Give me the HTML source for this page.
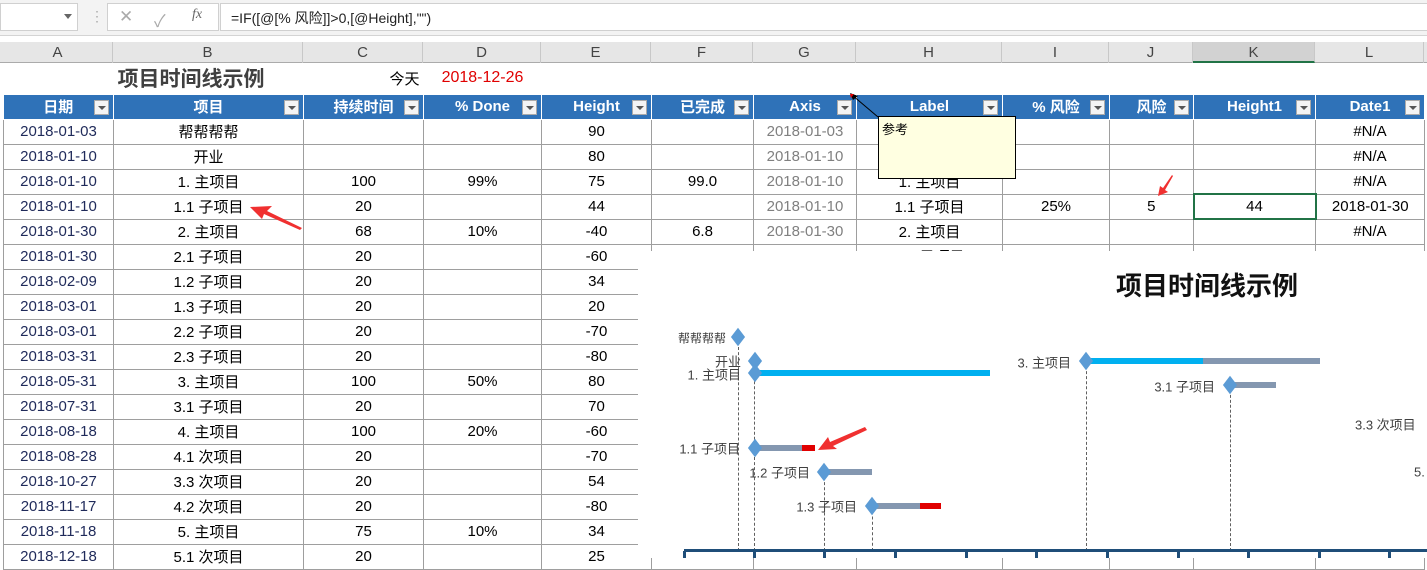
<!DOCTYPE html>
<html><head><meta charset="utf-8"><style>
*{margin:0;padding:0;box-sizing:border-box}
body{width:1427px;height:558px;overflow:hidden;background:#fff;font-family:"Liberation Sans","Noto Sans CJK SC",sans-serif;position:relative}
.abs{position:absolute}
#fbar{left:0;top:0;width:1427px;height:36px;background:#f3f3f3;border-bottom:1px solid #d4d4d4}
#colh{left:0;top:42px;width:1427px;height:21px;background:#e6e6e6;border-bottom:1px solid #ababab}
.ch{position:absolute;top:0;height:21px;line-height:21px;text-align:center;font-size:15px;color:#444;border-right:1px solid #c8c8c8}
table{position:absolute;left:3px;top:63px;border-collapse:collapse;table-layout:fixed}
td{border:1px solid #9e9e9e;height:25px;text-align:center;font-size:15px;color:#000;white-space:nowrap;overflow:hidden;padding:0}
td.d{color:#1f2a5a}
td.g{color:#808080}
tr.t td{border:none;height:31px}
tr.h td{background:#2f72b8;color:#fff;font-weight:bold;border:1px solid #fff;border-left:none;position:relative;font-size:15px}
.dd{position:absolute;right:4px;top:5px;width:15px;height:15px;background:#f4f4f4;border:1px solid #aaa}
.dd:after{content:"";position:absolute;left:3px;top:5px;border-left:4px solid transparent;border-right:4px solid transparent;border-top:4px solid #555}
#chart{left:638px;top:251px;width:789px;height:307px;background:#fff}
.lbl{position:absolute;font-size:13px;color:#404040;white-space:nowrap;transform:translateY(-50%)}
.dia{position:absolute;width:10px;height:10px;background:#5b9bd5;transform:translate(-50%,-50%) scaleY(1.3) rotate(45deg)}
.bar{position:absolute;height:6px;transform:translateY(-50%)}
.dash{position:absolute;width:0;border-left:1.5px dashed #606060}
.tick{position:absolute;top:551px;width:3px;height:7px;background:#1f4e79}
</style></head><body>
<div id="fbar" class="abs">
 <div class="abs" style="left:0;top:3px;width:78px;height:28px;background:#fff;border:1px solid #d0d0d0"></div>
 <div class="abs" style="left:64px;top:14px;border-left:4px solid transparent;border-right:4px solid transparent;border-top:5px solid #666"></div>
 <div class="abs" style="left:90px;top:8px;color:#aaa;font-size:14px">⋮</div>
 <div class="abs" style="left:107px;top:3px;width:112px;height:28px;background:#fff;border:1px solid #d0d0d0"></div>
 <div class="abs" style="left:119px;top:7px;color:#aaa;font-size:17px">✕</div>
 <div class="abs" style="left:154px;top:7px;color:#aaa;font-size:17px">✓</div>
 <div class="abs" style="left:192px;top:7px;color:#666;font-size:14px;font-style:italic;font-family:'Liberation Serif',serif">fx</div>
 <div class="abs" style="left:220px;top:3px;width:1210px;height:28px;background:#fff;border:1px solid #d0d0d0"></div>
 <div class="abs" style="left:231px;top:8px;font-size:14px;color:#222">=IF([@[% 风险]]&gt;0,[@Height],"")</div>
</div>
<div id="colh" class="abs">
 <div class="ch" style="left:3px;width:110px">A</div>
 <div class="ch" style="left:113px;width:190px">B</div>
 <div class="ch" style="left:303px;width:120px">C</div>
 <div class="ch" style="left:423px;width:118px">D</div>
 <div class="ch" style="left:541px;width:110px">E</div>
 <div class="ch" style="left:651px;width:102px">F</div>
 <div class="ch" style="left:753px;width:103px">G</div>
 <div class="ch" style="left:856px;width:146px">H</div>
 <div class="ch" style="left:1002px;width:107px">I</div>
 <div class="ch" style="left:1109px;width:84px">J</div>
 <div class="ch" style="left:1193px;width:122px;background:#d2d2d2;border-bottom:2px solid #217346">K</div>
 <div class="ch" style="left:1315px;width:109px">L</div>
</div>
<table>
<colgroup><col style="width:110px"><col style="width:190px"><col style="width:120px"><col style="width:118px"><col style="width:110px"><col style="width:102px"><col style="width:103px"><col style="width:146px"><col style="width:107px"><col style="width:84px"><col style="width:122px"><col style="width:109px"></colgroup>
<tr class="t"><td></td><td style="font-size:21px;font-weight:bold;color:#404040;text-align:left;padding-left:4px">项目时间线示例</td><td style="text-align:right;padding-right:4px">今天</td><td style="color:#e00000;font-size:16px">2018-12-26</td><td></td><td></td><td></td><td></td><td></td><td></td><td></td><td></td></tr>
<tr class="h"><td>日期<span class="dd"></span></td><td>项目<span class="dd"></span></td><td>持续时间<span class="dd"></span></td><td>% Done<span class="dd"></span></td><td>Height<span class="dd"></span></td><td>已完成<span class="dd"></span></td><td>Axis<span class="dd"></span></td><td>Label<span class="dd"></span></td><td>% 风险<span class="dd"></span></td><td>风险<span class="dd"></span></td><td>Height1<span class="dd"></span></td><td>Date1<span class="dd"></span></td></tr>
<tr><td class="d">2018-01-03</td><td>帮帮帮帮</td><td></td><td></td><td>90</td><td></td><td class="g">2018-01-03</td><td></td><td></td><td></td><td></td><td>#N/A</td></tr>
<tr><td class="d">2018-01-10</td><td>开业</td><td></td><td></td><td>80</td><td></td><td class="g">2018-01-10</td><td></td><td></td><td></td><td></td><td>#N/A</td></tr>
<tr><td class="d">2018-01-10</td><td>1. 主项目</td><td>100</td><td>99%</td><td>75</td><td>99.0</td><td class="g">2018-01-10</td><td>1. 主项目</td><td></td><td></td><td></td><td>#N/A</td></tr>
<tr><td class="d">2018-01-10</td><td>1.1 子项目</td><td>20</td><td></td><td>44</td><td></td><td class="g">2018-01-10</td><td>1.1 子项目</td><td>25%</td><td>5</td><td style="border:2px solid #217346">44</td><td>2018-01-30</td></tr>
<tr><td class="d">2018-01-30</td><td>2. 主项目</td><td>68</td><td>10%</td><td>-40</td><td>6.8</td><td class="g">2018-01-30</td><td>2. 主项目</td><td></td><td></td><td></td><td>#N/A</td></tr>
<tr><td class="d">2018-01-30</td><td>2.1 子项目</td><td>20</td><td></td><td>-60</td><td></td><td></td><td>2.1 子项目</td><td></td><td></td><td></td><td></td></tr>
<tr><td class="d">2018-02-09</td><td>1.2 子项目</td><td>20</td><td></td><td>34</td><td></td><td></td><td></td><td></td><td></td><td></td><td></td></tr>
<tr><td class="d">2018-03-01</td><td>1.3 子项目</td><td>20</td><td></td><td>20</td><td></td><td></td><td></td><td></td><td></td><td></td><td></td></tr>
<tr><td class="d">2018-03-01</td><td>2.2 子项目</td><td>20</td><td></td><td>-70</td><td></td><td></td><td></td><td></td><td></td><td></td><td></td></tr>
<tr><td class="d">2018-03-31</td><td>2.3 子项目</td><td>20</td><td></td><td>-80</td><td></td><td></td><td></td><td></td><td></td><td></td><td></td></tr>
<tr><td class="d">2018-05-31</td><td>3. 主项目</td><td>100</td><td>50%</td><td>80</td><td></td><td></td><td></td><td></td><td></td><td></td><td></td></tr>
<tr><td class="d">2018-07-31</td><td>3.1 子项目</td><td>20</td><td></td><td>70</td><td></td><td></td><td></td><td></td><td></td><td></td><td></td></tr>
<tr><td class="d">2018-08-18</td><td>4. 主项目</td><td>100</td><td>20%</td><td>-60</td><td></td><td></td><td></td><td></td><td></td><td></td><td></td></tr>
<tr><td class="d">2018-08-28</td><td>4.1 次项目</td><td>20</td><td></td><td>-70</td><td></td><td></td><td></td><td></td><td></td><td></td><td></td></tr>
<tr><td class="d">2018-10-27</td><td>3.3 次项目</td><td>20</td><td></td><td>54</td><td></td><td></td><td></td><td></td><td></td><td></td><td></td></tr>
<tr><td class="d">2018-11-17</td><td>4.2 次项目</td><td>20</td><td></td><td>-80</td><td></td><td></td><td></td><td></td><td></td><td></td><td></td></tr>
<tr><td class="d">2018-11-18</td><td>5. 主项目</td><td>75</td><td>10%</td><td>34</td><td></td><td></td><td></td><td></td><td></td><td></td><td></td></tr>
<tr><td class="d">2018-12-18</td><td>5.1 次项目</td><td>20</td><td></td><td>25</td><td></td><td></td><td></td><td></td><td></td><td></td><td></td></tr>
</table>
<div id="chart" class="abs"></div>
<div class="abs" style="left:1116px;top:266px;font-size:26px;font-weight:bold;color:#111">项目时间线示例</div>
<div class="dash" style="left:738px;top:337px;height:214px"></div>
<div class="dash" style="left:754px;top:361px;height:190px"></div>
<div class="dash" style="left:824px;top:472px;height:79px"></div>
<div class="dash" style="left:872px;top:506px;height:45px"></div>
<div class="dash" style="left:1086px;top:361px;height:190px"></div>
<div class="dash" style="left:1230px;top:385px;height:166px"></div>
<div class="bar" style="left:755px;top:373px;width:235px;background:#00b0f0"></div>
<div class="bar" style="left:755px;top:448px;width:47px;background:#8497b0"></div>
<div class="bar" style="left:802px;top:448px;width:13px;background:#e00000"></div>
<div class="bar" style="left:824px;top:472px;width:48px;background:#8497b0"></div>
<div class="bar" style="left:872px;top:506px;width:48px;background:#8497b0"></div>
<div class="bar" style="left:920px;top:506px;width:21px;background:#e00000"></div>
<div class="bar" style="left:1086px;top:361px;width:117px;background:#00b0f0"></div>
<div class="bar" style="left:1203px;top:361px;width:117px;background:#8497b0"></div>
<div class="bar" style="left:1230px;top:385px;width:46px;background:#8497b0"></div>
<div class="dia" style="left:738px;top:337px"></div>
<div class="dia" style="left:755px;top:361px"></div>
<div class="dia" style="left:755px;top:373px"></div>
<div class="dia" style="left:755px;top:448px"></div>
<div class="dia" style="left:824px;top:472px"></div>
<div class="dia" style="left:872px;top:506px"></div>
<div class="dia" style="left:1086px;top:361px"></div>
<div class="dia" style="left:1230px;top:385px"></div>
<div class="lbl" style="right:701px;top:338px;font-size:12px">帮帮帮帮</div>
<div class="lbl" style="right:686px;top:361px">开业</div>
<div class="lbl" style="right:686px;top:374px">1. 主项目</div>
<div class="lbl" style="right:687px;top:448px">1.1 子项目</div>
<div class="lbl" style="right:617px;top:472px">1.2 子项目</div>
<div class="lbl" style="right:570px;top:506px">1.3 子项目</div>
<div class="lbl" style="right:356px;top:362px">3. 主项目</div>
<div class="lbl" style="right:212px;top:386px">3.1 子项目</div>
<div class="lbl" style="left:1355px;top:424px">3.3 次项目</div>
<div class="lbl" style="left:1414px;top:472px">5.</div>
<div class="abs" style="left:684px;top:549px;width:743px;height:3px;background:#1f4e79"></div>
<div class="tick" style="left:683px"></div><div class="tick" style="left:753px"></div><div class="tick" style="left:823px"></div><div class="tick" style="left:894px"></div><div class="tick" style="left:965px"></div><div class="tick" style="left:1035px"></div><div class="tick" style="left:1106px"></div><div class="tick" style="left:1177px"></div><div class="tick" style="left:1247px"></div><div class="tick" style="left:1318px"></div><div class="tick" style="left:1388px"></div>
<svg class="abs" style="left:0;top:0" width="1427" height="558">
 <line x1="852" y1="95" x2="878" y2="117" stroke="#000" stroke-width="1"/>
 <polygon points="850,93 858,96 853,100" fill="#000"/>
 <polygon points="850,94 854,94 851,98" fill="#e00000"/>
 <polygon points="250,207 272,206 267,211 302,228 300,230 264,214 262,219" fill="#f03030"/>
 <polygon points="818,450 828,437 830,442 865,427 867,430 833,446 837,449" fill="#f03030"/>
 <polygon points="1158,196 1160,186 1163,188 1172,175 1173,176 1165,190 1168,192" fill="#f03030"/>
</svg>
<div class="abs" style="left:878px;top:116px;width:138px;height:63px;background:#ffffe1;border:1px solid #000;font-size:13px;padding:2px 3px">参考</div>
</body></html>
